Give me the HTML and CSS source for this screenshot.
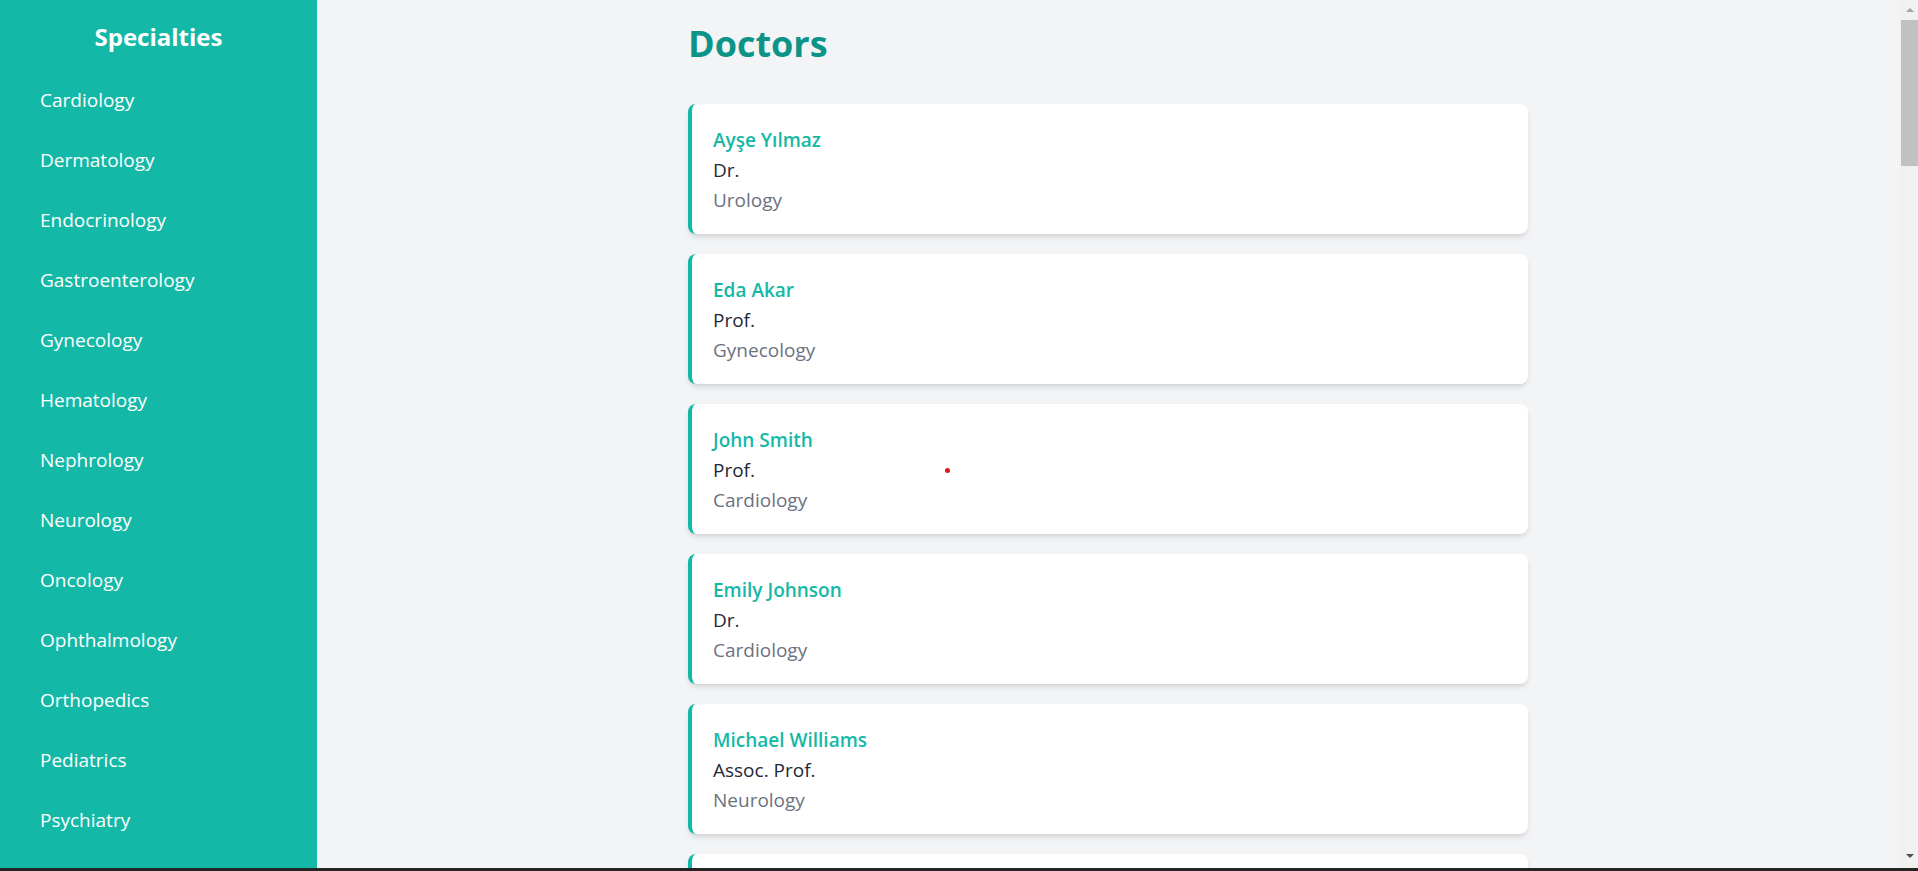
FILE: index.html
```html
<!DOCTYPE html>
<html lang="en">
<head>
<meta charset="utf-8">
<title>Doctors</title>
<link rel="stylesheet" href="styles.css">
</head>
<body>
<div class="app">
  <aside class="sidebar">
    <h2 class="sidebar-title">Specialties</h2>
    <ul class="spec-list">
      <li class="spec-item">Cardiology</li>
      <li class="spec-item">Dermatology</li>
      <li class="spec-item">Endocrinology</li>
      <li class="spec-item">Gastroenterology</li>
      <li class="spec-item">Gynecology</li>
      <li class="spec-item">Hematology</li>
      <li class="spec-item">Nephrology</li>
      <li class="spec-item">Neurology</li>
      <li class="spec-item">Oncology</li>
      <li class="spec-item">Ophthalmology</li>
      <li class="spec-item">Orthopedics</li>
      <li class="spec-item">Pediatrics</li>
      <li class="spec-item">Psychiatry</li>
    </ul>
  </aside>
  <main class="main">
    <div class="container">
      <h1 class="page-title">Doctors</h1>
      <div class="doctor-list">
        <div class="card"><div class="doc-name">Ayşe Yılmaz</div><div class="doc-title">Dr.</div><div class="doc-spec">Urology</div></div>
        <div class="card"><div class="doc-name">Eda Akar</div><div class="doc-title">Prof.</div><div class="doc-spec">Gynecology</div></div>
        <div class="card"><div class="doc-name">John Smith</div><div class="doc-title">Prof.</div><div class="doc-spec">Cardiology</div></div>
        <div class="card"><div class="doc-name">Emily Johnson</div><div class="doc-title">Dr.</div><div class="doc-spec">Cardiology</div></div>
        <div class="card"><div class="doc-name">Michael Williams</div><div class="doc-title">Assoc. Prof.</div><div class="doc-spec">Neurology</div></div>
        <div class="card card-empty"></div>
      </div>
    </div>
  </main>
  <div class="scrollbar">
    <div class="sb-button sb-up"><span class="sb-arrow-up"></span></div>
    <div class="sb-thumb"></div>
    <div class="sb-track"></div>
    <div class="sb-button sb-down"><span class="sb-arrow-down"></span></div>
  </div>
  <span class="cursor-dot"></span>
</div>
<div class="bottom-strip"></div>
</body>
</html>
```

FILE: styles.css
```css
* {
  box-sizing: border-box;
}

html, body {
  margin: 0;
  padding: 0;
  height: 100%;
  overflow: hidden;
}

body {
  display: flex;
  flex-direction: column;
  font-family: "Open Sans", "Noto Sans", "DejaVu Sans", sans-serif;
  background: #f3f4f6;
}

.app {
  position: relative;
  flex: 1;
  min-height: 0;
  display: flex;
}

.bottom-strip {
  height: 3px;
  flex: 0 0 3px;
  background: #252525;
}

.sidebar {
  flex: 0 0 317px;
  width: 317px;
  background: #14b8a6;
  color: #ffffff;
  padding: 21px 20px;
  overflow: hidden;
}

.sidebar-title {
  margin: 0 0 17px;
  font-size: 24px;
  line-height: 32px;
  font-weight: 700;
  text-align: center;
}

.spec-list {
  list-style: none;
  margin: 0;
  padding: 0;
}

.spec-item {
  padding: 15px 20px;
  font-size: 19px;
  line-height: 30px;
}

.main {
  flex: 1;
  min-width: 0;
  overflow: hidden;
}

.container {
  max-width: 840px;
  margin: 0 auto;
  padding: 24px 0 40px;
}

.page-title {
  margin: 0 0 40px;
  font-size: 36px;
  line-height: 40px;
  font-weight: 700;
  color: #0d9488;
}

.doctor-list {
  display: flex;
  flex-direction: column;
  gap: 20px;
}

.card {
  background: #ffffff;
  border-left: 4px solid #14b8a6;
  border-radius: 8px;
  padding: 21px 20px 19px 21px;
  box-shadow: 0 4px 6px -1px rgba(0, 0, 0, 0.1), 0 2px 4px -2px rgba(0, 0, 0, 0.1);
  line-height: 30px;
}

.card-empty {
  height: 130px;
}

.doc-name {
  font-size: 19px;
  font-weight: 600;
  color: #14b8a6;
}

.doc-title {
  font-size: 19px;
  color: #1f2937;
}

.doc-spec {
  font-size: 19px;
  color: #6b7280;
}

/* classic scrollbar */
.scrollbar {
  flex: 0 0 19px;
  width: 19px;
  display: flex;
  flex-direction: column;
  background: #f1f1f1;
}

.sb-button {
  flex: 0 0 20px;
  height: 20px;
  display: flex;
  align-items: center;
  justify-content: center;
  padding-left: 2px;
}

.sb-arrow-up {
  width: 0;
  height: 0;
  border-left: 4px solid transparent;
  border-right: 4px solid transparent;
  border-bottom: 4px solid #a3a3a3;
}

.sb-arrow-down {
  width: 0;
  height: 0;
  border-left: 4px solid transparent;
  border-right: 4px solid transparent;
  border-top: 4px solid #505050;
  margin-top: -4px;
}

.sb-thumb {
  flex: 0 0 146px;
  margin-left: 2px;
  background: #c1c1c1;
}

.sb-track {
  flex: 1;
}

.cursor-dot {
  position: absolute;
  left: 945px;
  top: 468px;
  width: 5px;
  height: 5px;
  border-radius: 50%;
  background: #e0151b;
}
```
